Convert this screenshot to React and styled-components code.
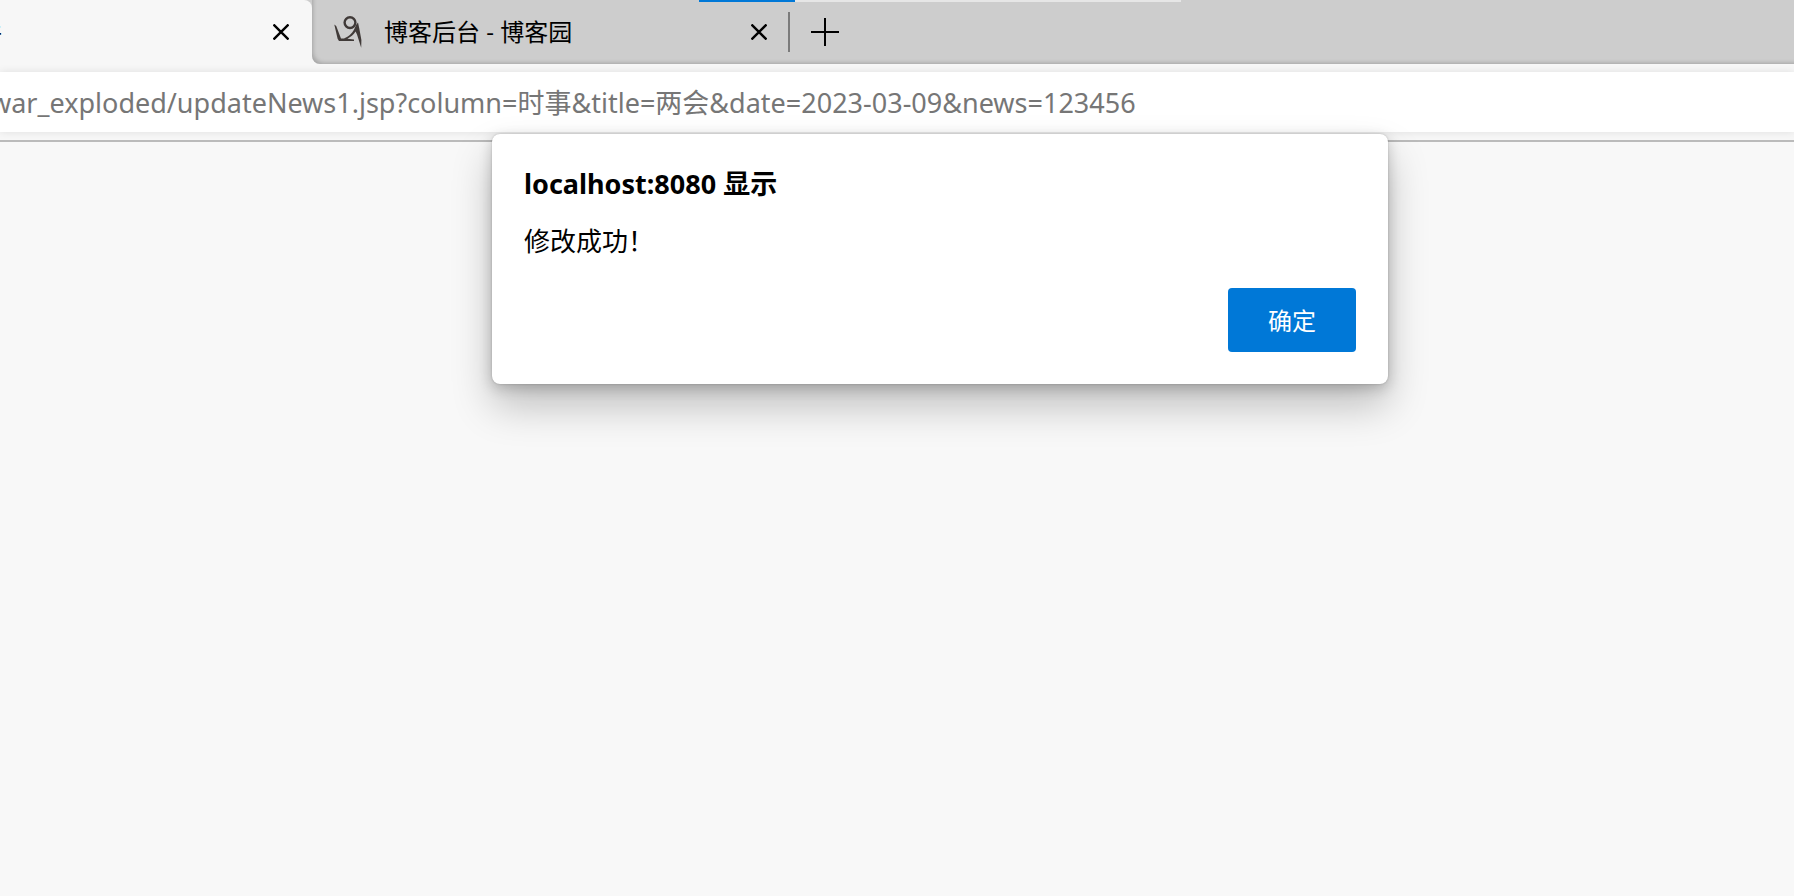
import React, { useState } from 'react';
import styled, { createGlobalStyle } from 'styled-components';

const PAGE_ADDRESS =
  'war_exploded/updateNews1.jsp?column=时事&title=两会&date=2023-03-09&news=123456';

function App() {
  const [address, setAddress] = useState(PAGE_ADDRESS);

  return (
    <>
      <GlobalStyle />
      <Browser>
        <TabStrip>
          <ActiveTab>
            <TabTitle>件</TabTitle>
            <CloseButton />
          </ActiveTab>
          <InactiveArea>
            <Tab>
              <BlogIcon />
              <TabTitle>博客后台 - 博客园</TabTitle>
              <CloseButton />
            </Tab>
            <Divider />
            <IconButton type="button" aria-label="新建标签页">
              <svg width="28" height="28" viewBox="0 0 28 28">
                <path d="M14 0V28M0 14H28" stroke="#000" strokeWidth="2" />
              </svg>
            </IconButton>
          </InactiveArea>
          <LoadingBar>
            <LoadingValue />
          </LoadingBar>
        </TabStrip>
        <Toolbar>
          <AddressBar>
            <AddressInput
              type="text"
              aria-label="地址栏"
              value={address}
              onChange={e => setAddress(e.target.value)}
            />
          </AddressBar>
        </Toolbar>
        <Page />
        <AlertBox role="alertdialog" aria-labelledby="title">
          <AlertTitle id="title">localhost:8080 显示</AlertTitle>
          <AlertMessage>修改成功！</AlertMessage>
          <AlertButtons>
            <ConfirmButton type="button">确定</ConfirmButton>
          </AlertButtons>
        </AlertBox>
      </Browser>
    </>
  );
}

function CloseButton() {
  return (
    <IconButton type="button" aria-label="关闭标签页">
      <svg width="16" height="16" viewBox="0 0 16 16">
        <path d="M0.5 0.5L15.5 15.5M15.5 0.5L0.5 15.5" stroke="#000" strokeWidth="2.4" />
      </svg>
    </IconButton>
  );
}

function BlogIcon() {
  return (
    <svg width="28" height="32" viewBox="0 0 28 32" aria-hidden="true">
      <circle cx="16" cy="6.6" r="5.4" fill="none" stroke="#403a38" strokeWidth="2.4" />
      <path
        d="M0.3 8.5L2.2 10L7 22.6L10 22.4C15.5 20.4 19.5 16 21.2 11L22.4 8.6L24 6.6L25.2 12L27.4 24L27.2 31.8L23 18.4L21.6 15.6C19.6 18.8 16.6 21.2 13.4 22.8L20 23.6V24.9H5L3.6 22.8Z"
        fill="#403a38"
      />
    </svg>
  );
}

export default App;

const GlobalStyle = createGlobalStyle`
  * {
    box-sizing: border-box;
  }

  body {
    margin: 0;
    background-color: #f8f8f8;
    font-family: 'Noto Sans', 'Noto Sans CJK SC', sans-serif;
    color: #000;
  }
`;

const Browser = styled.div`
  display: flex;
  flex-direction: column;
  position: relative;
  min-height: 100vh;
  overflow: hidden;
`;

const TabStrip = styled.header`
  display: flex;
  position: relative;
  height: 64px;
  background-color: #cdcdcd;
`;

const ActiveTab = styled.div`
  display: flex;
  align-items: center;
  justify-content: space-between;
  flex: none;
  width: 334px;
  margin-left: -22px;
  padding-right: 15px;
  border-top-right-radius: 8px;
  background-color: #f7f7f7;
`;

const InactiveArea = styled.div`
  display: flex;
  align-items: center;
  flex: 1;
  border-bottom-left-radius: 8px;
  box-shadow: inset 4px -4px 4px -3px rgba(0, 0, 0, 0.2),
    -8px 8px 0 0 #f7f7f7;
  clip-path: inset(0 0 0 0);
  background-color: #cdcdcd;
`;

const Tab = styled.div`
  display: flex;
  align-items: center;
  width: 476px;
  padding: 0 13px 0 22px;
  gap: 22px;

  button {
    margin-left: auto;
  }
`;

const TabTitle = styled.span`
  font-family: 'Open Sans', 'Noto Sans CJK SC', sans-serif;
  font-size: 24px;
  line-height: 36px;
  white-space: nowrap;
`;

const IconButton = styled.button`
  display: flex;
  align-items: center;
  justify-content: center;
  min-width: 32px;
  height: 32px;
  padding: 0;
  border: none;
  background: none;
  cursor: pointer;
`;

const Divider = styled.div`
  width: 2px;
  height: 40px;
  margin-right: 19px;
  background-color: #7b7b7b;
`;

const LoadingBar = styled.div`
  position: absolute;
  top: 0;
  left: 699px;
  width: 482px;
  height: 2px;
  background-color: #e6e6e6;
`;

const LoadingValue = styled.div`
  width: 20%;
  height: 100%;
  background-color: #0078d7;
`;

const Toolbar = styled.div`
  padding: 8px 0;
  border-bottom: 2px solid #bbb;
  background-color: #f7f7f7;
`;

const AddressBar = styled.div`
  display: flex;
  height: 60px;
  background-color: #fff;
  box-shadow: 0 0 8px rgba(0, 0, 0, 0.1);
`;

const AddressInput = styled.input`
  flex: 1;
  margin-left: -10px;
  padding: 0 0 2px;
  border: none;
  outline: none;
  background: none;
  font-family: 'Noto Sans', 'Noto Sans CJK SC', sans-serif;
  font-size: 27px;
  color: #767676;
`;

const Page = styled.main`
  flex: 1;
`;

const AlertBox = styled.section`
  position: absolute;
  top: 134px;
  left: 492px;
  width: 896px;
  padding: 32px;
  border-radius: 8px;
  background-color: #fff;
  box-shadow: 0 0 2px rgba(0, 0, 0, 0.22), 0 4px 14px rgba(0, 0, 0, 0.2),
    0 22px 40px rgba(0, 0, 0, 0.23);
`;

const AlertTitle = styled.h1`
  margin: 0 0 20px;
  font-size: 27px;
  font-weight: 700;
  line-height: 36px;
`;

const AlertMessage = styled.p`
  margin: 0 0 28px;
  font-size: 26px;
  line-height: 38px;
`;

const AlertButtons = styled.div`
  display: flex;
  justify-content: flex-end;
`;

const ConfirmButton = styled.button`
  width: 128px;
  height: 64px;
  padding: 0 0 2px;
  border: none;
  border-radius: 4px;
  background-color: #0078d7;
  font-family: 'Open Sans', 'Noto Sans CJK SC', sans-serif;
  font-size: 24px;
  color: #fff;
  cursor: pointer;
`;
